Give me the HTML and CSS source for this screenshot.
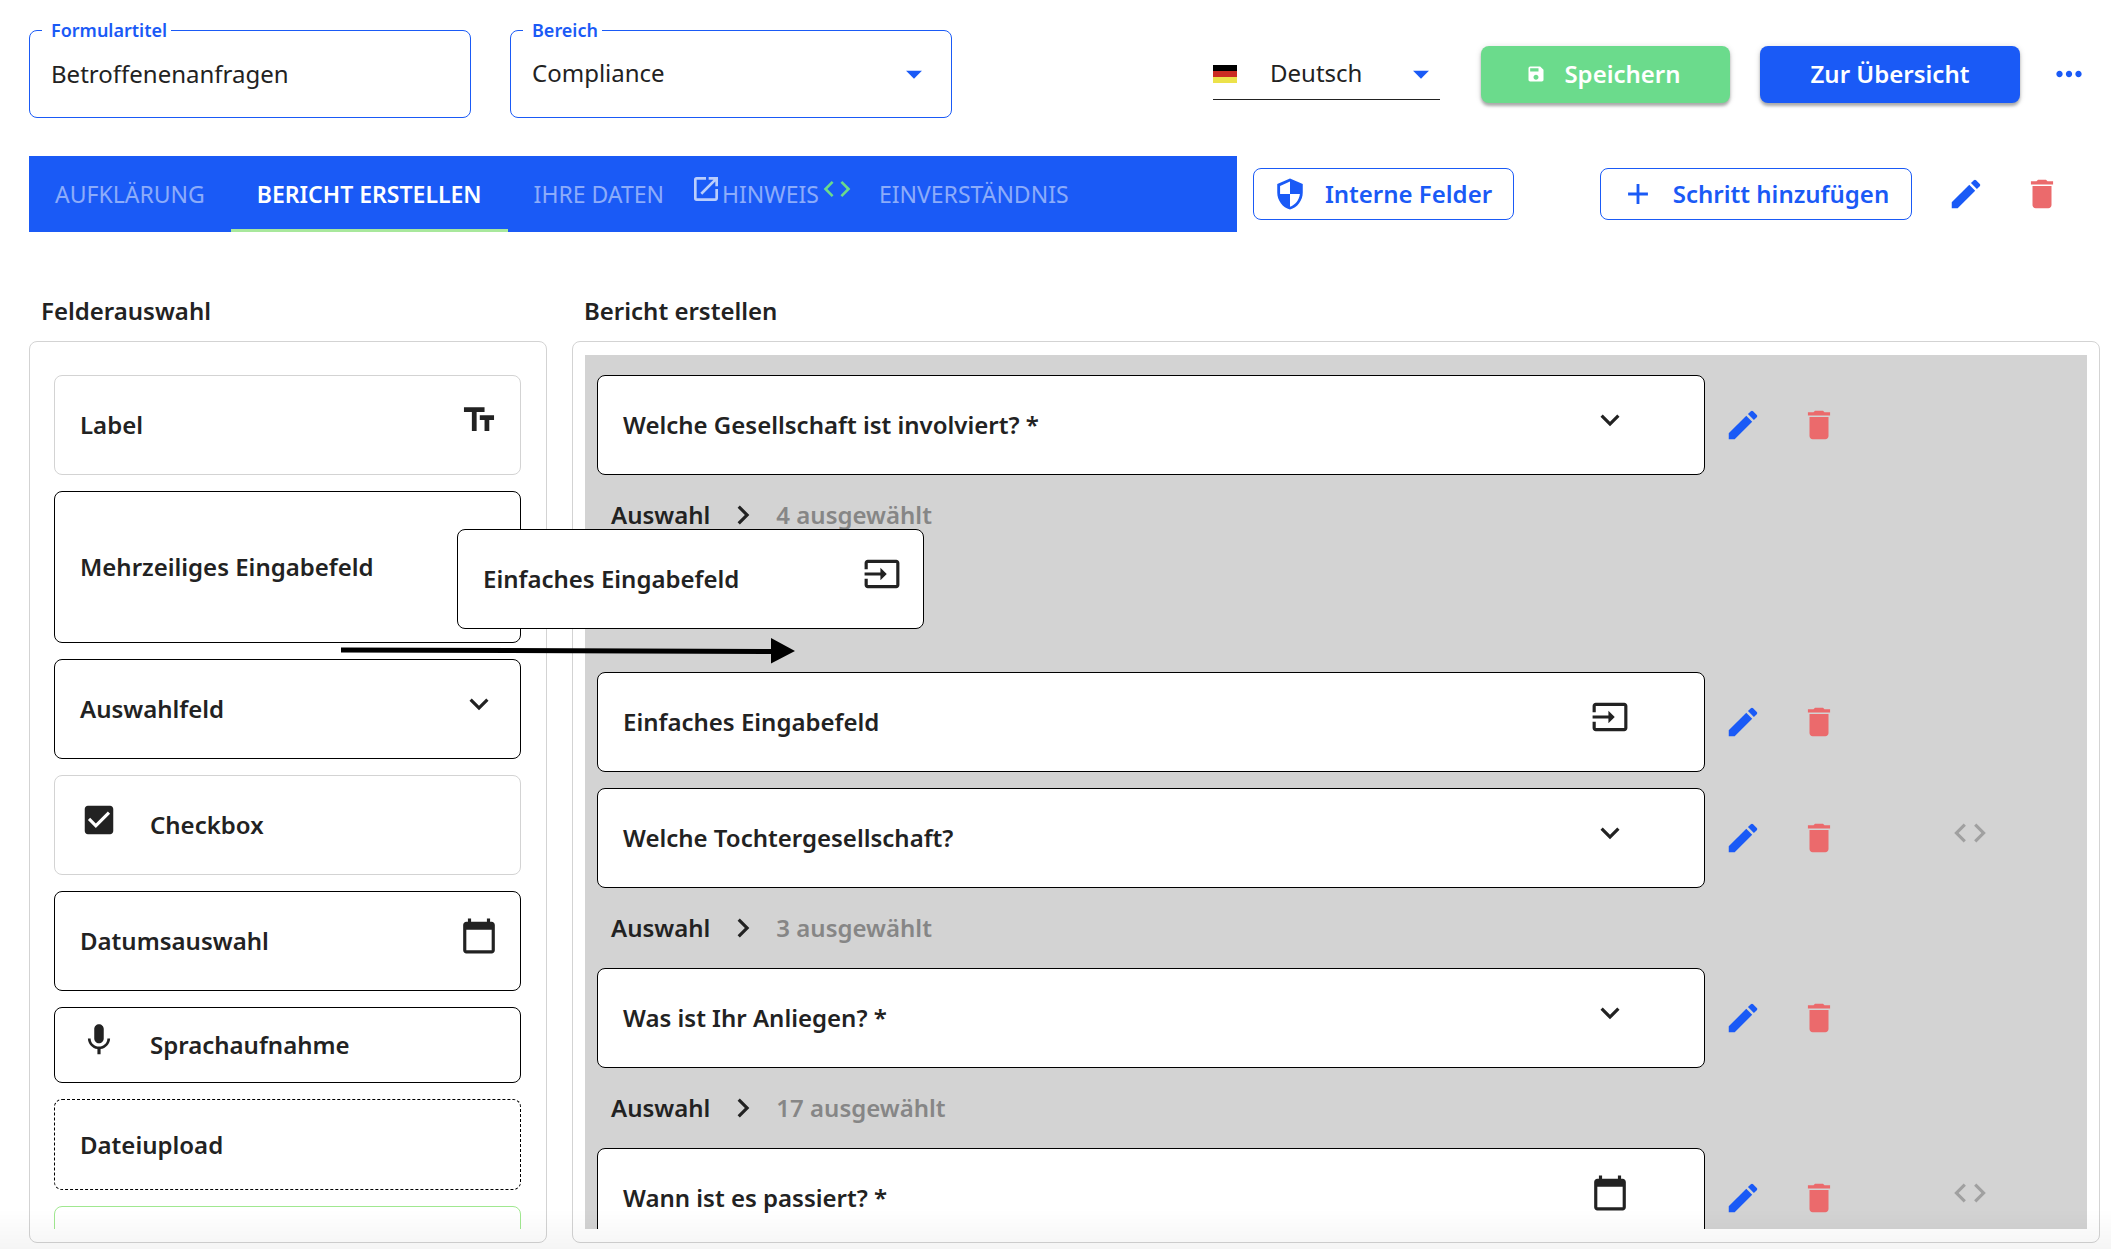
FILE: index.html
```html
<!DOCTYPE html>
<html lang="de">
<head>
<meta charset="utf-8">
<meta name="viewport" content="width=device-width, initial-scale=1">
<title>Formular bearbeiten</title>
<link rel="stylesheet" href="styles.css">
</head>
<body>
<svg class="sprite" aria-hidden="true">
  <symbol id="i-edit" viewBox="0 0 24 24"><path d="M3 17.25V21h3.75L17.81 9.94l-3.75-3.75L3 17.25zM20.71 7.04a1 1 0 0 0 0-1.41l-2.34-2.34a1 1 0 0 0-1.41 0l-1.83 1.83 3.75 3.75 1.83-1.83z"/></symbol>
  <symbol id="i-delete" viewBox="0 0 24 24"><path d="M6 19c0 1.1.9 2 2 2h8c1.1 0 2-.9 2-2V7H6v12zM19 4h-3.5l-1-1h-5l-1 1H5v2h14V4z"/></symbol>
  <symbol id="i-code" viewBox="0 0 24 24"><path d="M9.4 16.6L4.8 12l4.6-4.6L8 6l-6 6 6 6 1.4-1.4zm5.2 0l4.6-4.6-4.6-4.6L16 6l6 6-6 6-1.4-1.4z"/></symbol>
  <symbol id="i-down" viewBox="0 0 24 24"><path d="M16.59 8.59L12 13.17 7.41 8.59 6 10l6 6 6-6z"/></symbol>
  <symbol id="i-right" viewBox="0 0 24 24"><path d="M10 6L8.59 7.41 13.17 12l-4.58 4.59L10 18l6-6z"/></symbol>
  <symbol id="i-caret" viewBox="0 0 24 24"><path d="M7 10l5 5 5-5z"/></symbol>
  <symbol id="i-input" viewBox="0 0 24 24"><path d="M21 3.01H3c-1.1 0-2 .9-2 2V9h2V4.99h18v14.03H3V15H1v4.01c0 1.1.9 1.98 2 1.98h18c1.1 0 2-.88 2-1.98v-14c0-1.11-.9-2-2-2zM11 16l4-4-4-4v3H1v2h10v3z"/></symbol>
  <symbol id="i-calendar" viewBox="0 0 24 24"><path d="M20 3h-1V1h-2v2H7V1H5v2H4c-1.1 0-2 .9-2 2v16c0 1.1.9 2 2 2h16c1.1 0 2-.9 2-2V5c0-1.1-.9-2-2-2zm0 18H4V8h16v13z"/></symbol>
  <symbol id="i-text" viewBox="0 0 24 24"><path d="M2.5 4v3h5v12h3V7h5V4h-13zm19 5h-9v3h3v7h3v-7h3V9z"/></symbol>
  <symbol id="i-check" viewBox="0 0 24 24"><path d="M19 3H5c-1.11 0-2 .9-2 2v14c0 1.1.89 2 2 2h14c1.11 0 2-.9 2-2V5c0-1.1-.89-2-2-2zm-9 14l-5-5 1.41-1.41L10 14.17l7.59-7.59L19 8l-9 9z"/></symbol>
  <symbol id="i-mic" viewBox="0 0 24 24"><path d="M12 14c1.66 0 2.99-1.34 2.99-3L15 5c0-1.66-1.34-3-3-3S9 3.340 9 5v6c0 1.660 1.340 3 3 3zm5.300-3c0 3-2.540 5.100-5.300 5.100S6.700 14 6.700 11H5c0 3.410 2.720 6.230 6 6.720V21h2v-3.280c3.280-.480 6-3.300 6-6.720h-1.700z"/></symbol>
  <symbol id="i-save" viewBox="0 0 24 24"><path d="M17 3H5a2 2 0 0 0-2 2v14c0 1.100.890 2 2 2h14c1.100 0 2-.900 2-2V7l-4-4zm-5 16c-1.660 0-3-1.340-3-3s1.340-3 3-3 3 1.340 3 3-1.340 3-3 3zm3-10H5V5h10v4z"/></symbol>
  <symbol id="i-more" viewBox="0 0 24 24"><path d="M6 10c-1.100 0-2 .900-2 2s.900 2 2 2 2-.900 2-2-.900-2-2-2zm12 0c-1.100 0-2 .900-2 2s.900 2 2 2 2-.900 2-2-.900-2-2-2zm-6 0c-1.100 0-2 .900-2 2s.900 2 2 2 2-.900 2-2-.900-2-2-2z"/></symbol>
  <symbol id="i-open" viewBox="0 0 24 24"><path d="M19 19H5V5h7V3H5a2 2 0 0 0-2 2v14a2 2 0 0 0 2 2h14c1.100 0 2-.900 2-2v-7h-2v7zM14 3v2h3.590l-9.830 9.830 1.410 1.410L19 6.410V10h2V3h-7z"/></symbol>
  <symbol id="i-shield" viewBox="0 0 24 24"><path d="M12 1L3 5v6c0 5.550 3.840 10.740 9 12 5.160-1.260 9-6.450 9-12V5l-9-4zm0 10.990h7c-.530 4.120-3.280 7.790-7 8.940V12H5V6.300l7-3.110v8.800z"/></symbol>
  <symbol id="i-plus" viewBox="0 0 24 24"><path d="M19 13h-6v6h-2v-6H5v-2h6V5h2v6h6v2z"/></symbol>
</svg>

<div class="app">
  <header class="header">
    <fieldset class="field">
      <legend><label for="title">Formulartitel</label></legend>
      <input id="title" class="control" type="text" value="Betroffenenanfragen">
    </fieldset>
    <fieldset class="field">
      <legend><label for="area">Bereich</label></legend>
      <div class="select">
        <select id="area" class="control"><option>Compliance</option></select>
        <svg class="icon caret"><use href="#i-caret"/></svg>
      </div>
    </fieldset>
    <div class="language">
      <svg class="flag" viewBox="0 0 24 18" aria-hidden="true"><path fill="#000" d="M0 0h24v6H0z"/><path fill="#cb2c23" d="M0 6h24v6H0z"/><path fill="#ece24a" d="M0 12h24v6H0z"/></svg>
      <div class="select">
        <select class="control" aria-label="Sprache"><option>Deutsch</option></select>
        <svg class="icon caret"><use href="#i-caret"/></svg>
      </div>
    </div>
    <div class="header-actions">
      <button class="btn btn-save" type="button"><svg class="icon-small"><use href="#i-save"/></svg>Speichern</button>
      <button class="btn btn-primary" type="button">Zur Übersicht</button>
      <button class="icon-btn more" type="button" aria-label="Mehr"><svg class="icon"><use href="#i-more"/></svg></button>
    </div>
  </header>

  <div class="steps">
    <nav class="tabs" role="tablist">
      <button class="tab" role="tab" type="button">AUFKLÄRUNG</button>
      <button class="tab active" role="tab" type="button" aria-selected="true">BERICHT ERSTELLEN</button>
      <button class="tab" role="tab" type="button">IHRE DATEN</button>
      <button class="tab with-icons" role="tab" type="button"><svg class="tab-icon"><use href="#i-open"/></svg>HINWEIS<svg class="tab-icon condition"><use href="#i-code"/></svg></button>
      <button class="tab" role="tab" type="button">EINVERSTÄNDNIS</button>
    </nav>
    <button class="btn btn-outline internal" type="button"><svg class="icon-mid"><use href="#i-shield"/></svg>Interne Felder</button>
    <button class="btn btn-outline add" type="button"><svg class="icon-mid"><use href="#i-plus"/></svg>Schritt hinzufügen</button>
    <div class="step-actions">
      <button class="icon-btn edit" type="button" aria-label="Schritt bearbeiten"><svg class="icon"><use href="#i-edit"/></svg></button>
      <button class="icon-btn delete" type="button" aria-label="Schritt löschen"><svg class="icon"><use href="#i-delete"/></svg></button>
    </div>
  </div>

  <main class="workspace">
    <section class="column palette">
      <h2>Felderauswahl</h2>
      <div class="panel">
        <div class="scroll palette-list">
          <div class="card light">Label<svg class="icon raised end"><use href="#i-text"/></svg></div>
          <div class="card multiline">Mehrzeiliges Eingabefeld</div>
          <div class="card">Auswahlfeld<svg class="icon raised end"><use href="#i-down"/></svg></div>
          <div class="card light"><svg class="icon raised start"><use href="#i-check"/></svg>Checkbox</div>
          <div class="card">Datumsauswahl<svg class="icon raised end"><use href="#i-calendar"/></svg></div>
          <div class="card compact"><svg class="icon raised start"><use href="#i-mic"/></svg>Sprachaufnahme</div>
          <div class="card upload">Dateiupload</div>
          <div class="card green"></div>
        </div>
      </div>
    </section>

    <section class="column canvas">
      <h2>Bericht erstellen</h2>
      <div class="panel">
        <div class="scroll form-list">
          <div class="row">
            <div class="card">Welche Gesellschaft ist involviert? *<svg class="icon raised end"><use href="#i-down"/></svg></div>
            <button class="icon-btn edit" type="button" aria-label="Bearbeiten"><svg class="icon"><use href="#i-edit"/></svg></button>
            <button class="icon-btn delete" type="button" aria-label="Löschen"><svg class="icon"><use href="#i-delete"/></svg></button>
          </div>
          <button class="selection" type="button">Auswahl<svg class="icon"><use href="#i-right"/></svg><span class="count">4 ausgewählt</span></button>
          <div class="drop-slot"></div>
          <div class="row spaced">
            <div class="card">Einfaches Eingabefeld<svg class="icon raised end"><use href="#i-input"/></svg></div>
            <button class="icon-btn edit" type="button" aria-label="Bearbeiten"><svg class="icon"><use href="#i-edit"/></svg></button>
            <button class="icon-btn delete" type="button" aria-label="Löschen"><svg class="icon"><use href="#i-delete"/></svg></button>
          </div>
          <div class="row">
            <div class="card">Welche Tochtergesellschaft?<svg class="icon raised end"><use href="#i-down"/></svg></div>
            <button class="icon-btn edit" type="button" aria-label="Bearbeiten"><svg class="icon"><use href="#i-edit"/></svg></button>
            <button class="icon-btn delete" type="button" aria-label="Löschen"><svg class="icon"><use href="#i-delete"/></svg></button>
            <button class="icon-btn code" type="button" aria-label="Bedingung"><svg class="icon raised"><use href="#i-code"/></svg></button>
          </div>
          <button class="selection" type="button">Auswahl<svg class="icon"><use href="#i-right"/></svg><span class="count">3 ausgewählt</span></button>
          <div class="row">
            <div class="card">Was ist Ihr Anliegen? *<svg class="icon raised end"><use href="#i-down"/></svg></div>
            <button class="icon-btn edit" type="button" aria-label="Bearbeiten"><svg class="icon"><use href="#i-edit"/></svg></button>
            <button class="icon-btn delete" type="button" aria-label="Löschen"><svg class="icon"><use href="#i-delete"/></svg></button>
          </div>
          <button class="selection" type="button">Auswahl<svg class="icon"><use href="#i-right"/></svg><span class="count">17 ausgewählt</span></button>
          <div class="row">
            <div class="card">Wann ist es passiert? *<svg class="icon raised end"><use href="#i-calendar"/></svg></div>
            <button class="icon-btn edit" type="button" aria-label="Bearbeiten"><svg class="icon"><use href="#i-edit"/></svg></button>
            <button class="icon-btn delete" type="button" aria-label="Löschen"><svg class="icon"><use href="#i-delete"/></svg></button>
            <button class="icon-btn code" type="button" aria-label="Bedingung"><svg class="icon raised"><use href="#i-code"/></svg></button>
          </div>
        </div>
      </div>
    </section>

    <div class="card dragged">Einfaches Eingabefeld<svg class="icon raised end"><use href="#i-input"/></svg></div>
    <svg class="drag-arrow" viewBox="0 0 454 26" aria-hidden="true"><path d="M0 9.500L430 11V0l24 13-24 12.500V16L0 14.500z"/></svg>
  </main>
</div>
</body>
</html>
```
FILE: styles.css
```css
:root {
  --blue: #1a5af6;
  --green: #6bdb8c;
  --red: #eb6a6c;
  --ink: #222;
  --line: #d3d3d3;
}

* { box-sizing: border-box; }

body {
  margin: 0;
  background: #fff;
  color: var(--ink);
  font: 400 24px/32px "Noto Sans", "Open Sans", sans-serif;
}

button, input, select { font: inherit; color: inherit; }

button {
  margin: 0;
  padding: 0;
  border: 0;
  background: none;
  cursor: pointer;
}

svg { display: block; flex: none; fill: currentColor; }

.sprite { position: absolute; width: 0; height: 0; }
.icon { width: 38px; height: 38px; }
.icon-mid { width: 34px; height: 34px; }
.icon-small { width: 20px; height: 20px; }

.app {
  display: flex;
  flex-direction: column;
  height: 100vh;
  padding: 30px 11px 6px 29px;
}

/* the page fades slightly towards the bottom edge */
.app::after {
  content: "";
  position: fixed;
  inset: auto 0 0 0;
  height: 40px;
  background: linear-gradient(rgba(0, 0, 0, 0), rgba(0, 0, 0, .04));
  pointer-events: none;
}

/* header */
.header {
  display: flex;
  align-items: center;
  gap: 39px;
  padding-right: 12px;
}

.field {
  flex: 0 1 442px;
  min-width: 0;
  margin: -12px 0 0;
  padding: 0 0 11px 12px;
  border: 1px solid var(--blue);
  border-radius: 8px;
}

.field legend {
  padding: 0 4px 0 9px;
  color: var(--blue);
  font-size: 18px;
  font-weight: 600;
  line-height: 24px;
}

.control {
  display: block;
  width: 100%;
  height: 64px;
  padding: 0 9px 2px;
  border: 0;
  outline: 0;
  background: none;
  appearance: none;
}

.select { display: grid; flex: 1; align-items: center; }
.select > * { grid-area: 1 / 1; }
.caret { justify-self: end; color: var(--blue); pointer-events: none; }
.field .caret { margin-right: 18px; }

.language {
  display: flex;
  align-items: center;
  gap: 24px;
  width: 227px;
  margin-left: auto;
  border-bottom: 1px solid var(--ink);
}

.language .control { height: 50px; }
.flag { width: 24px; height: 18px; }

.header-actions { display: flex; align-items: center; gap: 30px; margin-left: 2px; }

.btn {
  display: flex;
  align-items: center;
  justify-content: center;
  border-radius: 8px;
  font-weight: 600;
  white-space: nowrap;
}

.btn-save, .btn-primary {
  height: 57px;
  color: #fff;
  box-shadow: 0 3px 3px rgba(0, 0, 0, .28), 0 1px 6px rgba(0, 0, 0, .14);
}

.btn-save { gap: 18px; width: 249px; padding-right: 4px; background: var(--green); }
.btn-primary { width: 260px; background: var(--blue); }
.more { width: 38px; color: var(--blue); }

/* steps */
.steps {
  display: flex;
  align-items: center;
  margin-top: 38px;
  padding-right: 20px;
}

.tabs {
  display: flex;
  flex: 1;
  height: 76px;
  margin-right: 16px;
  background: var(--blue);
}

.tab {
  display: flex;
  align-items: center;
  padding: 0 26px;
  border-top: 3px solid transparent;
  border-bottom: 3px solid transparent;
  color: rgba(255, 255, 255, .5);
  font-size: 23px;
  white-space: nowrap;
}

.tab.active { border-bottom-color: #a8e89c; color: #fff; font-weight: 600; }
.tab.with-icons { padding: 0; }
.tab-icon { width: 32px; height: 32px; margin-bottom: 10px; color: rgba(255, 255, 255, .7); }
.tab-icon.condition { margin-left: 2px; color: var(--green); }

.btn-outline {
  height: 52px;
  border: 1px solid var(--blue);
  color: var(--blue);
}

.internal { gap: 18px; width: 261px; margin-right: 86px; padding-right: 2px; }
.add { gap: 18px; width: 312px; margin-right: 16px; padding-right: 2px; }
.step-actions { display: flex; }

.icon-btn { display: flex; align-items: center; justify-content: center; }
.step-actions .icon-btn { width: 76px; }
.edit { color: var(--blue); }
.delete { color: var(--red); }
.code { color: #a0a0a0; }

/* workspace */
.workspace {
  position: relative;
  display: flex;
  flex: 1;
  gap: 25px;
  min-height: 0;
  margin-top: 63px;
}

.column { display: flex; flex-direction: column; min-width: 0; }
.palette { flex: 0 0 518px; }
.canvas { flex: 1; }

h2 {
  margin: 0 12px 14px;
  font-size: 24px;
  font-weight: 600;
  line-height: 32px;
}

.panel {
  display: flex;
  flex: 1;
  min-height: 0;
  padding: 13px 12px;
  border: 1px solid var(--line);
  border-radius: 8px;
}

.scroll { flex: 1; overflow: hidden; padding: 20px 12px 0; }

.palette-list {
  display: flex;
  flex-direction: column;
  gap: 16px;
  padding-right: 13px;
}

.card {
  display: flex;
  flex: none;
  align-items: center;
  height: 100px;
  padding: 0 22px 0 25px;
  border: 1px solid #000;
  border-radius: 8px;
  background: #fff;
  font-weight: 600;
  white-space: nowrap;
}

.card.light { border-color: var(--line); }
.card.multiline { height: 152px; }
.card.compact { height: 76px; }
.card.upload { height: 91px; border-style: dashed; }
.card.green { border-color: #a0e890; }

.raised { margin-bottom: 10px; }
.end { margin-left: auto; }
.start { margin-right: 32px; }

.form-list { padding-right: 4px; background: var(--line); }

.row {
  display: grid;
  grid-template-columns: minmax(0, 1fr) 76px 76px 226px;
}

.row.spaced { margin-bottom: 16px; }
.row .card { padding-right: 75px; }

.selection {
  display: flex;
  align-items: center;
  gap: 14px;
  height: 80px;
  padding-left: 14px;
  font-weight: 600;
}

.count { color: #868686; }
.drop-slot { height: 117px; }

/* field being dragged from the palette into the form */
.dragged { position: absolute; top: 234px; left: 428px; width: 467px; }
.drag-arrow { position: absolute; top: 343px; left: 312px; width: 454px; height: 26px; fill: #000; }
```
